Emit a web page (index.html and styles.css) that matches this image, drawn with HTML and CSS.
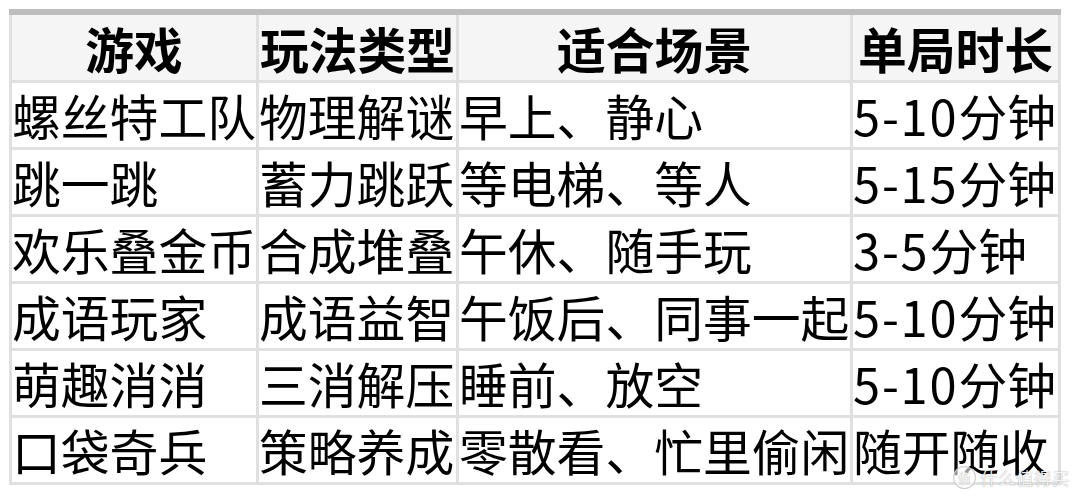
FILE: index.html
```html
<!DOCTYPE html>
<html lang="zh-CN">
<head>
<meta charset="utf-8">
<title>小游戏推荐表</title>
<link rel="stylesheet" href="styles.css">
</head>
<body>
<div class="page">
  <div class="sheet" role="table">
    <div class="cell head">游戏</div>
    <div class="cell head">玩法类型</div>
    <div class="cell head">适合场景</div>
    <div class="cell head">单局时长</div>

    <div class="cell">螺丝特工队</div>
    <div class="cell">物理解谜</div>
    <div class="cell">早上、静心</div>
    <div class="cell"><span class="num">5-10</span>分钟</div>

    <div class="cell">跳一跳</div>
    <div class="cell">蓄力跳跃</div>
    <div class="cell">等电梯、等人</div>
    <div class="cell"><span class="num">5-15</span>分钟</div>

    <div class="cell">欢乐叠金币</div>
    <div class="cell">合成堆叠</div>
    <div class="cell">午休、随手玩</div>
    <div class="cell"><span class="num">3-5</span>分钟</div>

    <div class="cell">成语玩家</div>
    <div class="cell">成语益智</div>
    <div class="cell">午饭后、同事一起</div>
    <div class="cell"><span class="num">5-10</span>分钟</div>

    <div class="cell">萌趣消消</div>
    <div class="cell">三消解压</div>
    <div class="cell">睡前、放空</div>
    <div class="cell"><span class="num">5-10</span>分钟</div>

    <div class="cell">口袋奇兵</div>
    <div class="cell">策略养成</div>
    <div class="cell">零散看、忙里偷闲</div>
    <div class="cell">随开随收</div>
  </div>
  <div class="watermark"><span class="wm-badge">值</span><span class="wm-text">什么值得买</span></div>
</div>
</body>
</html>
```

FILE: styles.css
```css
html, body {
  margin: 0;
  padding: 0;
  background: #ffffff;
}

.page {
  position: relative;
  width: 1080px;
  height: 499px;
  padding: 9px 0 0 9px;
  box-sizing: border-box;
  font-family: "Noto Sans CJK SC", "Noto Sans", sans-serif;
  color: #000;
}

.sheet {
  display: grid;
  grid-template-columns: 244px 197px 391px 205px;
  grid-template-rows: 65px repeat(6, 64px);
  gap: 3px;
  width: 1052px;
  box-sizing: border-box;
  padding: 0 3px 3px 3px;
  border-top: 6px solid #bdbdbd;
  background: #e0e0e0;
}

.cell {
  background: #ffffff;
  font-size: 48.8px;
  line-height: 64px;
  white-space: nowrap;
  overflow: visible;
  text-align: left;
}

.num {
  letter-spacing: 1.8px;
}

.cell.head {
  background: #f5f5f5;
  font-weight: 700;
  line-height: 65px;
  text-align: center;
}

.watermark {
  position: absolute;
  left: 953px;
  top: 466px;
  display: flex;
  align-items: center;
  gap: 4px;
  color: rgba(255, 255, 255, 0.92);
  text-shadow: 0 0 1px rgba(0, 0, 0, 0.45);
}

.wm-badge {
  display: flex;
  align-items: center;
  justify-content: center;
  width: 21px;
  height: 21px;
  border-radius: 50%;
  border: 1.5px solid rgba(200, 200, 200, 0.9);
  background: rgba(255, 255, 255, 0.6);
  font-size: 13px;
  line-height: 1;
  color: rgba(255, 255, 255, 0.95);
}

.wm-text {
  font-size: 17.5px;
  line-height: 22px;
  letter-spacing: 0.5px;
}
```
